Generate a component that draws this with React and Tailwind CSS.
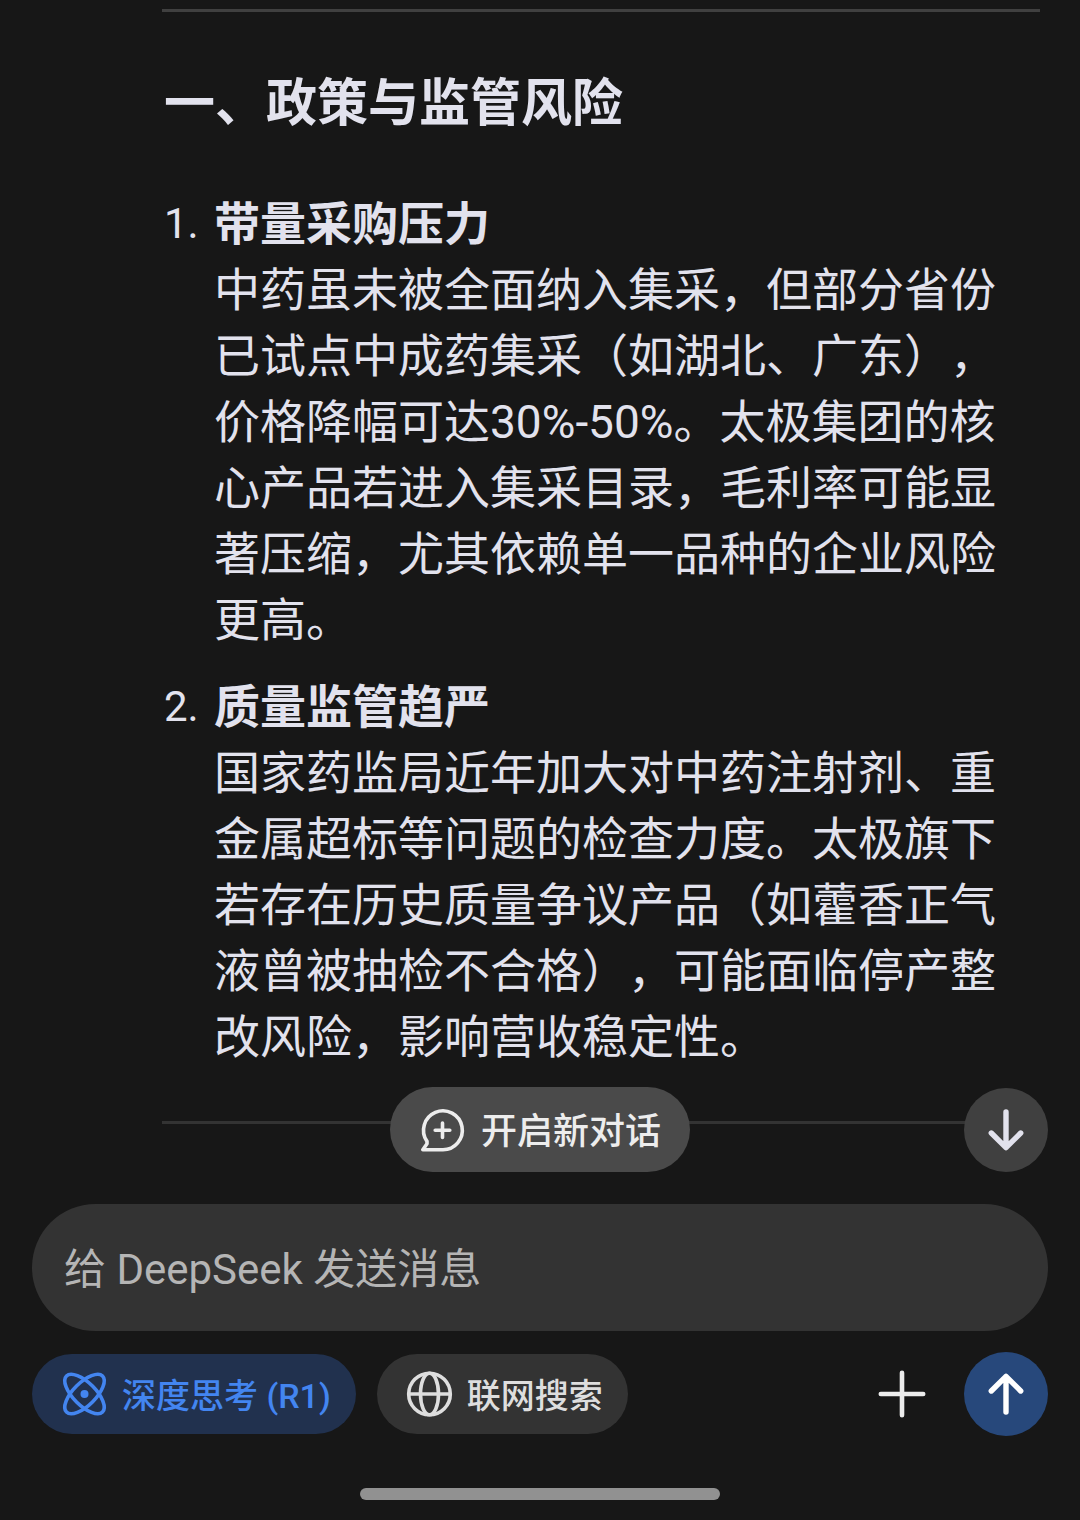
import React from 'react';

const risks = [
  {
    title: '带量采购压力',
    body: '中药虽未被全面纳入集采，但部分省份已试点中成药集采（如湖北、广东），价格降幅可达30%-50%。太极集团的核心产品若进入集采目录，毛利率可能显著压缩，尤其依赖单一品种的企业风险更高。',
  },
  {
    title: '质量监管趋严',
    body: '国家药监局近年加大对中药注射剂、重金属超标等问题的检查力度。太极旗下若存在历史质量争议产品（如藿香正气液曾被抽检不合格），可能面临停产整改风险，影响营收稳定性。',
  },
];

function NewChatIcon() {
  return (
    <svg className="size-12" viewBox="0 0 48 48" fill="none" stroke="currentColor" strokeWidth="3.6" strokeLinecap="round" strokeLinejoin="round" aria-hidden="true">
      <path d="M23.500 43.700H3.800L8 37.800V35.400A19.400 19.400 0 1 1 23.500 43.700Z" />
      <path d="M23.500 17v14.500M16.200 24.200h14.600" />
    </svg>
  );
}

function AtomIcon() {
  return (
    <svg className="size-12" viewBox="0 0 48 48" fill="none" stroke="currentColor" strokeWidth="3.6" aria-hidden="true">
      <ellipse cx="24.500" cy="24" rx="25.500" ry="11.300" transform="rotate(45 24.5 24)" />
      <ellipse cx="24.500" cy="24" rx="25.500" ry="11.300" transform="rotate(-45 24.5 24)" />
      <circle cx="24.500" cy="24" r="4" fill="currentColor" stroke="none" />
    </svg>
  );
}

function GlobeIcon() {
  return (
    <svg className="size-12" viewBox="0 0 48 48" fill="none" stroke="currentColor" strokeWidth="3.6" aria-hidden="true">
      <circle cx="24.500" cy="24" r="20.800" />
      <ellipse cx="24.500" cy="24" rx="9" ry="20.800" />
      <path d="M3.700 24h41.600" />
    </svg>
  );
}

function ArrowIcon({ className }) {
  return (
    <svg className={className} viewBox="0 0 48 48" fill="none" stroke="currentColor" strokeWidth="5.400" strokeLinecap="round" strokeLinejoin="round" aria-hidden="true">
      <path d="M24 42V6.500M9.300 21 24 6.300 38.700 21" />
    </svg>
  );
}

function PlusIcon() {
  return (
    <svg className="size-12" viewBox="0 0 48 48" fill="none" stroke="currentColor" strokeWidth="4.600" strokeLinecap="round" aria-hidden="true">
      <path d="M24 2.800v42.400M2.800 24h42.400" />
    </svg>
  );
}

function Answer() {
  return (
    <main className="pt-[9px] pl-[162px] pr-10 text-[#e2e2ed] [text-spacing-trim:space-all]">
      <hr className="border-0 h-[3px] bg-[#404040]" />
      <h2 className="mt-14 pl-[2px] text-[51px] leading-[72px] font-bold">一、政策与监管风险</h2>
      <ol className="mt-[51px] flex flex-col gap-[21px]">
        {risks.map((risk, i) => (
          <li key={risk.title} className="flex text-[46px] leading-[66px]">
            <span className="w-13 pl-[2px] shrink-0 text-[42px]">{i + 1}.</span>
            <div className="flex-1 min-w-0">
              <h3 className="font-bold">{risk.title}</h3>
              <p>{risk.body}</p>
            </div>
          </li>
        ))}
      </ol>
      <hr className="mt-[51px] border-0 h-[3px] bg-[#333333]" />
    </main>
  );
}

function Composer() {
  return (
    <form className="relative mt-20 px-8" onSubmit={(e) => e.preventDefault()}>
      {/* floating actions over the end of the answer */}
      <div className="absolute inset-x-8 bottom-full mb-8 flex justify-center">
        <button type="button" className="flex items-center gap-[14px] h-[85px] px-[29px] rounded-full bg-[#4a4a4a] text-[#ededed] text-[36px] font-medium">
          <NewChatIcon />
          <span className="pt-1">开启新对话</span>
        </button>
        <button type="button" aria-label="滚动到底部" className="absolute right-0 bottom-0 size-21 rounded-full bg-[#404040] text-[#e2e2ed] flex items-center justify-center">
          <ArrowIcon className="size-12 rotate-180" />
        </button>
      </div>

      <input
        type="text"
        aria-label="给 DeepSeek 发送消息"
        placeholder="给 DeepSeek 发送消息"
        className="block w-full h-[127px] px-8 pt-1 rounded-full bg-[#333333] text-[42px] text-[#e2e2ed] placeholder:text-[#b5b5b5] outline-none"
      />

      <div className="mt-[21px] flex items-center">
        <button type="button" aria-pressed="true" className="flex items-center gap-[14px] h-20 pl-7 pr-[25px] rounded-full bg-[#21314e] text-[#4385f0] text-[34px] font-medium">
          <AtomIcon />
          <span className="pt-1">深度思考 (R1)</span>
        </button>
        <button type="button" aria-pressed="false" className="ml-[21px] flex items-center gap-[14px] h-20 pl-7 pr-[25px] rounded-full bg-[#333333] text-[#dedede] text-[34px] font-medium">
          <GlobeIcon />
          <span className="pt-1">联网搜索</span>
        </button>
        <button type="button" aria-label="添加附件" className="ml-auto text-[#ececec]">
          <PlusIcon />
        </button>
        <button type="submit" aria-label="发送" className="ml-[38px] size-21 rounded-full bg-[#27487b] text-white flex items-center justify-center">
          <ArrowIcon className="size-12" />
        </button>
      </div>
    </form>
  );
}

function App() {
  return (
    <div lang="zh-CN" className="min-h-screen flex flex-col bg-[#171717] font-[Roboto,'Noto_Sans_CJK_SC',sans-serif]">
      <Answer />
      <Composer />
      <div className="mt-auto mb-5 self-center w-1/3 h-3 rounded-full bg-[#919191]" />
    </div>
  );
}

export default App;
